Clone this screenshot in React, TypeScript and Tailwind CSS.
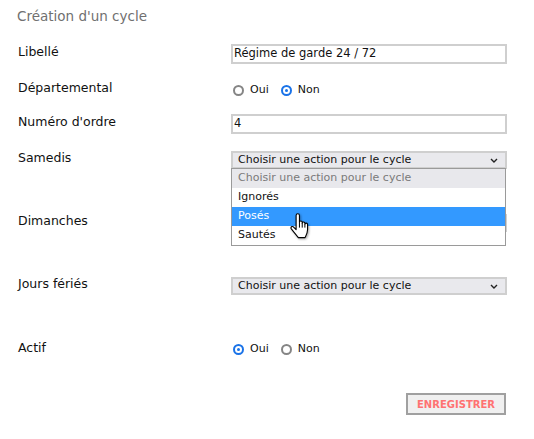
import React from "react";

const options = ["Ignorés", "Posés", "Sautés"];

function Radio({ checked, label }: { checked?: boolean; label: string }) {
  return (
    <label className="flex items-center gap-[6px] text-[11px] leading-[14px] text-[#111]">
      {checked ? (
        <span className="flex h-[11px] w-[11px] items-center justify-center rounded-full border-2 border-[#1a73e8] bg-white">
          <span className="h-[3px] w-[3px] rounded-full bg-[#1a73e8]" />
        </span>
      ) : (
        <span className="h-[11px] w-[11px] rounded-full border-2 border-[#858585] bg-white" />
      )}
      {label}
    </label>
  );
}

function Chevron() {
  return (
    <svg width="8" height="5" viewBox="0 0 8 5" className="shrink-0">
      <path d="M1 1 L4 4 L7 1" fill="none" stroke="#222" strokeWidth="1.4" />
    </svg>
  );
}

function Select({ children }: { children?: React.ReactNode }) {
  return (
    <div className="relative w-[276px]">
      <div className="flex h-[18px] items-center justify-between border-2 border-[#cfcfcf] bg-[#e9e9ed] pl-[5px] pr-[7px] text-[11px] text-[#111]">
        <span>Choisir une action pour le cycle</span>
        <Chevron />
      </div>
      {children}
    </div>
  );
}

function HandCursor() {
  return (
    <svg width="20" height="27" viewBox="0 0 18 24" className="absolute left-[58px] top-[44px] drop-shadow-[1px_1px_1px_rgba(0,0,0,0.35)]">
      <path
        d="M5.5 2 C5.5 1 6 0.5 7 0.5 C8 0.5 8.5 1 8.5 2 L8.5 8 C8.5 7.3 9 7 9.7 7 C10.4 7 11 7.3 11 8 L11 9 C11 8.3 11.5 8 12.2 8 C12.9 8 13.4 8.3 13.4 9 L13.4 10 C13.4 9.3 13.9 9 14.6 9 C15.3 9 15.8 9.4 15.8 10.2 L15.8 15 C15.8 18 14.5 20 13.5 22 L7.5 22 L3.5 17 L1.2 14.2 C0.6 13.4 0.8 12.4 1.6 12.1 C2.3 11.8 3 12.2 3.5 12.8 L5.5 14.8 Z"
        fill="#fff"
        stroke="#000"
        strokeWidth="1"
        strokeLinejoin="round"
      />
      <path d="M8.5 8 L8.5 13 M11 9 L11 13 M13.4 10 L13.4 13" stroke="#000" strokeWidth="0.9" fill="none" />
    </svg>
  );
}

function Row({ label, height, children, controlTop }: { label: string; height: number; children: React.ReactNode; controlTop: string }) {
  return (
    <div className="flex" style={{ height }}>
      <div className="w-[213px] shrink-0 pt-[4px] text-[12.5px] leading-[16px] text-[#111]">{label}</div>
      <div className={controlTop}>{children}</div>
    </div>
  );
}

export default function App() {
  return (
    <div className="relative h-[439px] w-[534px] bg-white pl-[18px] font-['DejaVu_Sans',sans-serif]">
      <h2 className="-ml-px pt-[7px] text-[13.5px] font-normal leading-[18px] text-[#707070]">Création d'un cycle</h2>

      <div className="mt-[15px] flex flex-col">
        <Row label="Libellé" height={36} controlTop="pt-[4px]">
          <div className="flex h-[20px] w-[276px] items-center border-2 border-[#cfcfcf] pl-[1px] text-[11.5px] text-[#111]">
            Régime de garde 24 / 72
          </div>
        </Row>

        <Row label="Départemental" height={34} controlTop="pt-[7px] pl-[2px]">
          <div className="flex gap-[12px]">
            <Radio label="Oui" />
            <Radio checked label="Non" />
          </div>
        </Row>

        <Row label="Numéro d'ordre" height={36} controlTop="pt-[4px]">
          <div className="flex h-[20px] w-[276px] items-center border-2 border-[#cfcfcf] pl-[1px] text-[11.5px] text-[#111]">
            4
          </div>
        </Row>

        <Row label="Samedis" height={63} controlTop="pt-[5px] relative z-10">
          <Select>
            {/* open option list */}
            <div className="absolute left-0 top-[17px] w-[275px] border border-[#9a9a9a] bg-white text-[11px]">
              <div className="flex h-[19px] items-center bg-[#e8e8ec] pl-[6px] text-[#7a7a7a]">Choisir une action pour le cycle</div>
              {options.map((o) => (
                <div
                  key={o}
                  className={`flex h-[19px] items-center pl-[6px] ${o === "Posés" ? "bg-[#3399ff] text-white" : "text-[#111]"}`}
                >
                  {o}
                </div>
              ))}
              <HandCursor />
            </div>
          </Select>
        </Row>

        <Row label="Dimanches" height={63} controlTop="pt-[5px]">
          <Select />
        </Row>

        <Row label="Jours fériés" height={64} controlTop="pt-[5px]">
          <Select />
        </Row>

        <Row label="Actif" height={40} controlTop="pt-[6px] pl-[2px]">
          <div className="flex gap-[12px]">
            <Radio checked label="Oui" />
            <Radio label="Non" />
          </div>
        </Row>
      </div>

      <div className="mt-[17px] flex justify-end pr-[28px]">
        <button className="flex h-[22px] w-[100px] items-center justify-center border-2 border-[#a0a0a0] bg-[#f0f0f0] text-[10px] font-bold text-[#ff7272]">
          ENREGISTRER
        </button>
      </div>
    </div>
  );
}
